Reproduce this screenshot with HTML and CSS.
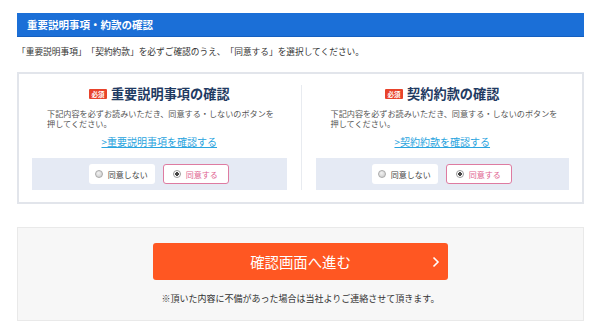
FILE: index.html
```html
<!DOCTYPE html>
<html lang="ja">
<head>
<meta charset="utf-8">
<title>重要説明事項・約款の確認</title>
<link rel="stylesheet" href="styles.css">
</head>
<body>
<div class="page">
  <div class="head">重要説明事項・約款の確認</div>
  <p class="lead">「重要説明事項」「契約約款」を必ずご確認のうえ、「同意する」を選択してください。</p>
  <div class="agree">
    <div class="col">
      <h2 class="ttl"><span class="req">必須</span>重要説明事項の確認</h2>
      <p class="desc">下記内容を必ずお読みいただき、同意する・しないのボタンを<br>押してください。</p>
      <p class="link"><a href="#">&gt;重要説明事項を確認する</a></p>
      <div class="zone">
        <span class="opt"><span class="radio"></span>同意しない</span>
        <span class="opt on"><span class="radio"></span>同意する</span>
      </div>
    </div>
    <div class="col col-r">
      <h2 class="ttl"><span class="req">必須</span>契約約款の確認</h2>
      <p class="desc">下記内容を必ずお読みいただき、同意する・しないのボタンを<br>押してください。</p>
      <p class="link"><a href="#">&gt;契約約款を確認する</a></p>
      <div class="zone">
        <span class="opt"><span class="radio"></span>同意しない</span>
        <span class="opt on"><span class="radio"></span>同意する</span>
      </div>
    </div>
  </div>
  <div class="submit">
    <a class="btn" href="#">確認画面へ進む
      <svg class="chev" width="8" height="12" viewBox="0 0 8 12"><polyline points="1.5,1.5 6,6 1.5,10.5" fill="none" stroke="#fff" stroke-width="1.6"/></svg>
    </a>
    <p class="note">※頂いた内容に不備があった場合は当社よりご連絡させて頂きます。</p>
  </div>
</div>
</body>
</html>
```
FILE: styles.css
```css
* { box-sizing: border-box; }
html, body { margin: 0; padding: 0; background: #fff; }
body {
  font-family: "Noto Sans CJK JP", "Noto Sans", "Liberation Sans", sans-serif;
  color: #333;
  text-spacing-trim: space-all;
}
.page { padding: 13px 16px 0 17px; width: 600px; }
.head {
  height: 24px;
  line-height: 24px;
  background: #1b6fd7;
  border-bottom: 1px solid #155fbf;
  color: #fff;
  font-weight: 700;
  font-size: 10.5px;
  padding-left: 10px;
}
.lead {
  margin: 10px 0 0;
  font-size: 8.7px;
  line-height: 10px;
  color: #333;
}
.agree {
  margin-top: 15px;
  border: 2px solid #e2e5eb;
  display: grid;
  grid-template-columns: 1fr 1fr;
}
.col {
  margin: 11px 0 12px;
  padding: 0 14px 0 13px;
  text-align: center;
}
.col-r { border-left: 1px solid #e8ebf0; padding: 0 13px 0 14px; }
.ttl {
  margin: 1px 0 0;
  height: 16px;
  line-height: 16px;
  font-size: 13.2px;
  font-weight: 700;
  color: #1f3a62;
  display: flex;
  justify-content: center;
  align-items: center;
}
.req {
  display: inline-block;
  width: 18px;
  height: 10px;
  line-height: 10px;
  background: #e8432b;
  color: #fff;
  font-size: 6.5px;
  font-weight: 700;
  border-radius: 1px;
  margin-right: 4px;
  text-align: center;
}
.desc {
  margin: 7px 0 0;
  padding: 0 0 0 15px;
  text-align: left;
  font-size: 8.15px;
  line-height: 10px;
  color: #555;
  white-space: nowrap;
}
.link {
  margin: 7px 0 0;
  font-size: 10px;
  line-height: 12px;
}
.link a { color: #2aa4de; text-decoration: underline; }
.zone {
  margin-top: 10px;
  background: #e5eaf4;
  padding: 6px 0;
  display: flex;
  justify-content: center;
  gap: 8px;
}
.opt {
  width: 66px;
  height: 20px;
  background: #fff;
  border-radius: 3px;
  display: flex;
  align-items: center;
  justify-content: center;
  gap: 5px;
  font-size: 8px;
  color: #444;
  padding-right: 2px;
}
.opt.on {
  border: 1px solid #de7ba1;
  color: #e0638f;
}
.radio {
  width: 8px;
  height: 8px;
  border-radius: 50%;
  border: 1px solid #a9a9a9;
  background: radial-gradient(circle at 40% 35%, #f2f2f2, #c8c8c8);
  flex: none;
}
.opt.on .radio {
  background: radial-gradient(circle, #444 0 1.6px, #fff 2px);
  border-color: #9a9a9a;
}
.submit {
  margin-top: 23px;
  background: #f7f7f7;
  border: 1px solid #e9e9e9;
  padding: 15px 0 15px;
  text-align: center;
}
.btn {
  position: relative;
  display: block;
  width: 295px;
  height: 37px;
  line-height: 37px;
  margin: 0 auto;
  background: #ff5722;
  border-radius: 3px;
  color: #fff;
  text-decoration: none;
  font-size: 14.4px;
}
.chev { position: absolute; right: 8px; top: 13px; }
.note {
  margin: 13px 0 0;
  font-size: 9px;
  line-height: 12px;
  color: #333;
}
```
